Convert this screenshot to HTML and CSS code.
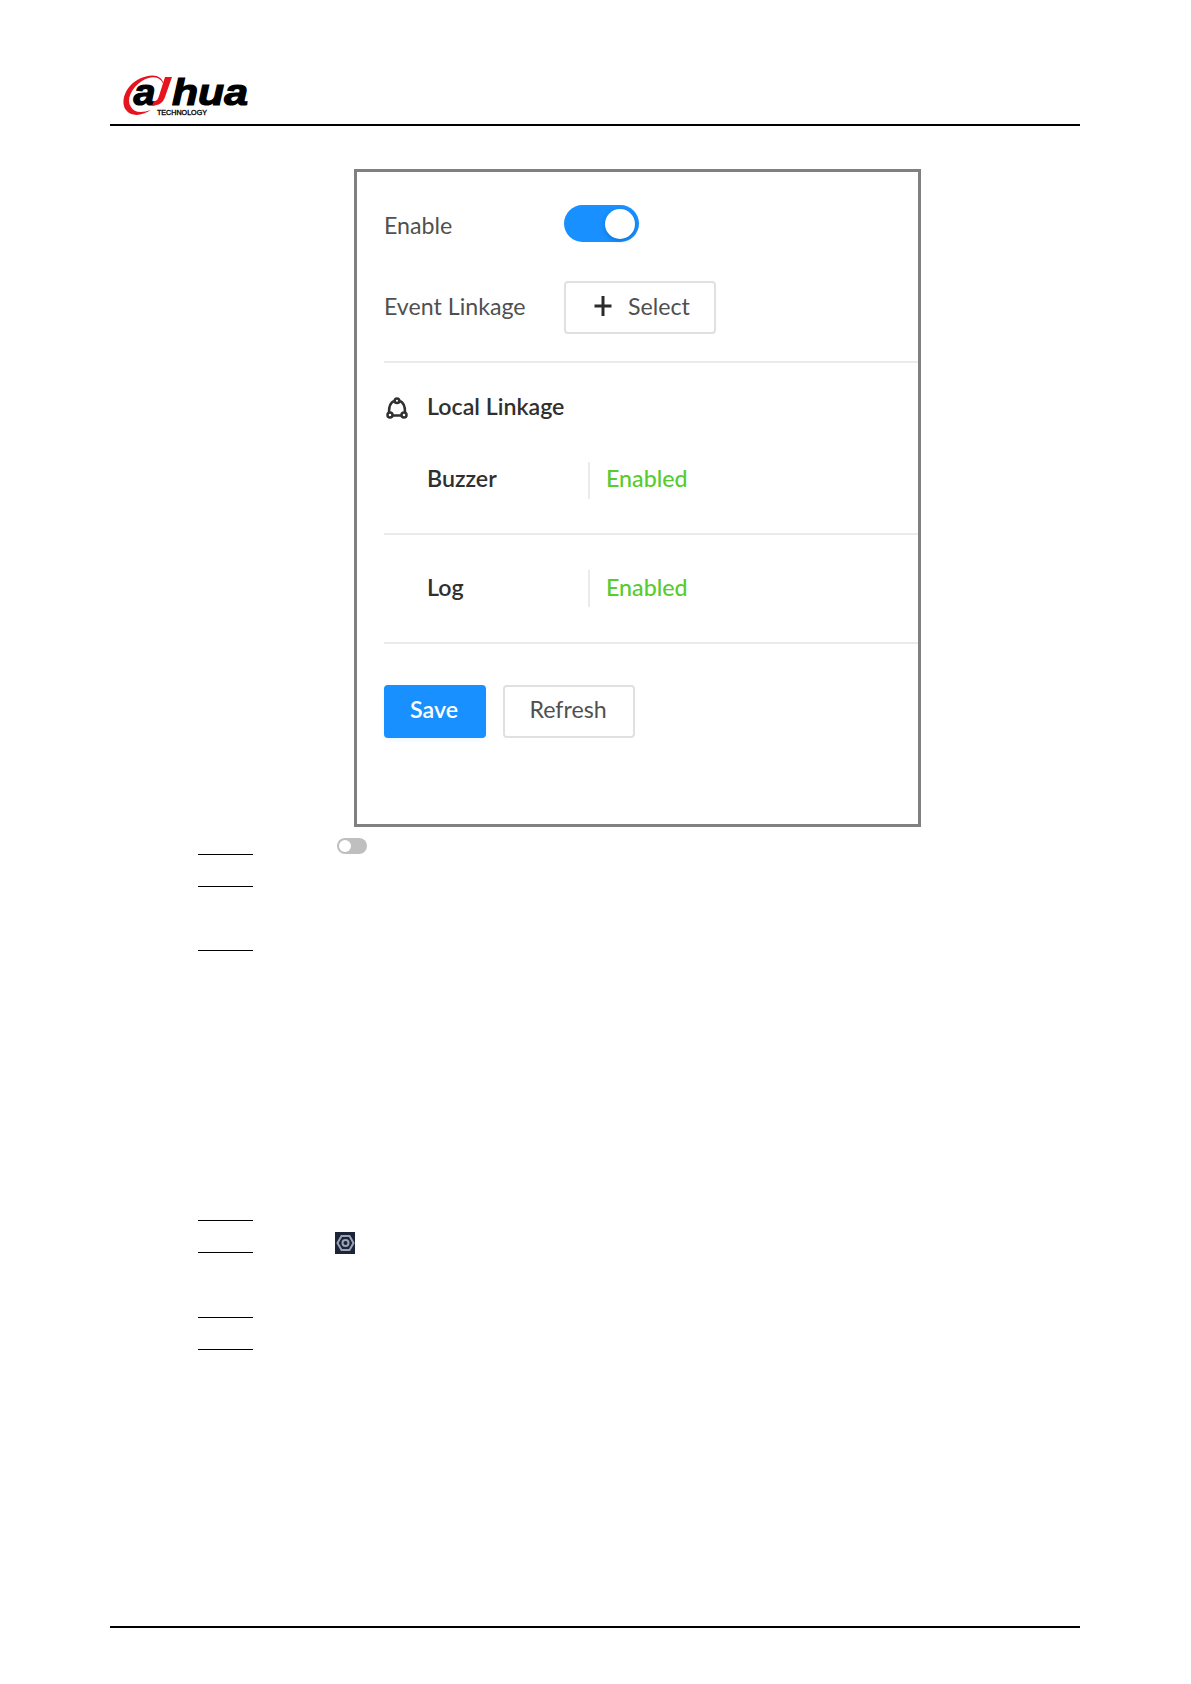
FILE: index.html
```
<!DOCTYPE html>
<html lang="en">
<head>
    <meta charset="UTF-8">
    <meta name="viewport" content="width=device-width, initial-scale=1.0">
    <title>Dahua Technology</title>
    <link rel="stylesheet" href="styles.css">
</head>
<body>
    <div class="page">
        <header class="page-header">
            <svg class="logo" width="130" height="44" viewBox="0 0 130 44">
                <path class="swirl" d="M41 13C40 1 28 0 16 6C2 13 -3 29 3 37C8 44 19 43 28 37C19 40 11 40 8 34C3 27 8 15 19 8C29 2 38 3 41 13Z"/>
                <text class="logo-text" x="10.500" y="31.800" textLength="22" lengthAdjust="spacingAndGlyphs">a</text>
                <path class="stroke-red" d="M42 4H49L42 24C40 30 36 32.500 29 32.500L31 28C34 28 35 26 36 23Z"/>
                <text class="logo-text" x="49" y="31.800" textLength="76" lengthAdjust="spacingAndGlyphs">hua</text>
                <text class="logo-sub" x="34" y="42" textLength="50" lengthAdjust="spacingAndGlyphs">TECHNOLOGY</text>
            </svg>
        </header>

        <main class="content">
            <div class="panel">
                <div class="row row-enable">
                    <span class="label">Enable</span>
                    <span class="switch"></span>
                </div>
                <div class="row row-event">
                    <span class="label">Event Linkage</span>
                    <button class="btn btn-select">
                        <svg width="18" height="20" viewBox="0 0 18 20"><path d="M9 0V20M0.5 10H17.5"/></svg>
                        <span>Select</span>
                    </button>
                </div>
                <div class="linkage-title">
                    <svg width="22" height="22" viewBox="0 0 22 22">
                        <path d="M8 4C4.500 5.500 3 8.500 3 15M14 4C17.500 5.500 19 8.500 19 15M7 18.500H15"/>
                        <circle cx="11" cy="3.700" r="2.300"/>
                        <circle cx="4" cy="18" r="2.500"/>
                        <circle cx="18" cy="18" r="2.500"/>
                    </svg>
                    <span>Local Linkage</span>
                </div>
                <div class="linkage-item buzzer">
                    <span class="name">Buzzer</span>
                    <span class="status">Enabled</span>
                </div>
                <div class="linkage-item log">
                    <span class="name">Log</span>
                    <span class="status">Enabled</span>
                </div>
                <div class="actions">
                    <button class="btn btn-save">Save</button>
                    <button class="btn btn-refresh">Refresh</button>
                </div>
            </div>

            <div class="steps">
                <div class="step step-first">
                    <span class="step-line"></span>
                    <span class="switch-off"></span>
                </div>
                <div class="step"><span class="step-line"></span></div>
                <div class="step step-tall"><span class="step-line"></span></div>
            </div>
            <div class="steps steps-second">
                <div class="step"><span class="step-line"></span></div>
                <div class="step">
                    <span class="step-line"></span>
                    <svg class="gear" width="20" height="22" viewBox="0 0 20 22">
                        <rect width="20" height="22"/>
                        <path d="M6.500 4H14.500L18.500 11L14.500 18H6.500L2.500 11Z"/>
                        <circle cx="10.500" cy="11" r="3"/>
                    </svg>
                </div>
                <div class="step step-config"><span class="step-line"></span></div>
                <div class="step"><span class="step-line"></span></div>
            </div>
        </main>

        <footer class="page-footer"></footer>
    </div>
</body>
</html>
```
FILE: styles.css
```
* {
    box-sizing: border-box;
}
body {
    margin: 0;
    background-color: #fff;
    font-family: Lato, "Liberation Sans", sans-serif;
}
.page {
    height: 1684px;
    padding: 0 111px 56px 110px;
    display: flex;
    flex-direction: column;
}

/* header */
.page-header {
    height: 126px;
    padding: 73px 0 0 13px;
    border-bottom: 2px solid #000;
}
.logo {
    display: block;
    overflow: visible;
}
.logo-text {
    font: italic bold 37px "Liberation Sans", sans-serif;
    fill: #000;
    stroke: #000;
    stroke-width: 1.2px;
}
.logo-sub {
    font: 6.5px "Liberation Sans", sans-serif;
    fill: #000;
    stroke: #000;
    stroke-width: 0.3px;
}
.swirl, .stroke-red {
    fill: #e6141e;
}
.content {
    flex: 1;
}
.page-footer {
    height: 2px;
    background-color: #000;
}

/* settings panel */
.panel {
    width: 567px;
    height: 658px;
    margin: 43px 0 0 244px;
    padding-left: 27px;
    border: 3px solid #808080;
    font-size: 23.2px;
    line-height: 28px;
    color: #505050;
}
.row {
    display: flex;
    align-items: center;
}
.row .label {
    width: 180px;
}
.row-enable {
    height: 37px;
    margin-top: 33px;
}
.row-enable .label {
    padding-top: 2px;
}
.row-event {
    height: 121px;
    padding-top: 12px;
    border-bottom: 2px solid #ebebeb;
}
.row-event .label {
    padding-bottom: 4px;
}
.switch {
    width: 75px;
    height: 37px;
    padding: 4px;
    border-radius: 19px;
    background-color: #1890ff;
}
.switch::after {
    content: "";
    display: block;
    width: 30px;
    height: 30px;
    margin-left: auto;
    border-radius: 50%;
    background-color: #fff;
    box-shadow: 0 2px 4px rgba(0, 35, 90, 0.25);
}
.btn {
    height: 53px;
    padding: 0 2px 5px 0;
    border: 2px solid #e0e0e0;
    border-radius: 4px;
    background-color: #fff;
    color: #505050;
    font: inherit;
}
.btn-select {
    width: 152px;
    display: flex;
    align-items: center;
    gap: 16px;
    padding: 0 0 3px 28px;
}
.btn-select svg {
    fill: none;
    stroke: #2b2b2b;
    stroke-width: 3px;
}
.linkage-title {
    height: 72px;
    padding: 29px 0 0 2px;
    display: flex;
    gap: 19px;
    color: #303030;
    font-weight: 600;
}
.linkage-title svg {
    margin-top: 5px;
    fill: none;
    stroke: #303030;
    stroke-width: 2.5px;
}
.linkage-item {
    display: flex;
    align-items: center;
    padding-left: 43px;
    border-bottom: 2px solid #ebebeb;
}
.linkage-item .name {
    width: 161px;
    padding-bottom: 4px;
    color: #303030;
    font-weight: 600;
}
.linkage-item .status {
    height: 37px;
    padding: 2px 0 0 16px;
    border-left: 2px solid #ebebeb;
    color: #58cb2d;
    font-weight: 500;
}
.buzzer {
    height: 100px;
    padding-bottom: 8px;
}
.log {
    height: 109px;
}
.log .status {
    padding-top: 3px;
}
.actions {
    display: flex;
    gap: 17px;
    margin-top: 41px;
}
.btn-save {
    width: 102px;
    border-color: #1890ff;
    background-color: #1890ff;
    color: #fff;
    font-weight: 600;
    box-shadow: 0 2px 4px rgba(24, 144, 255, 0.08);
}
.btn-refresh {
    width: 132px;
}

/* steps */
.steps {
    padding-left: 88px;
}
.steps-second {
    margin-top: 238px;
}
.step {
    display: flex;
    align-items: flex-end;
    height: 32px;
}
.step-first {
    height: 28px;
}
.step-tall {
    height: 64px;
}
.step-config {
    height: 65px;
}
.step-line {
    width: 55px;
    height: 1px;
    background-color: #000;
}
.switch-off {
    width: 30px;
    height: 16px;
    margin: 0 0 1px 84px;
    padding: 2px;
    border-radius: 8px;
    background-color: #bfbfbf;
}
.switch-off::after {
    content: "";
    display: block;
    width: 12px;
    height: 12px;
    border-radius: 50%;
    background-color: #fff;
}
.gear {
    margin: 0 0 -1px 82px;
    fill: none;
    stroke: #9ca3b3;
    stroke-width: 2px;
}
.gear rect {
    fill: #1c2438;
    stroke: none;
}
```
